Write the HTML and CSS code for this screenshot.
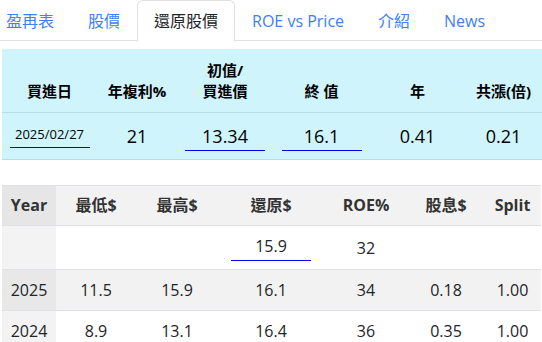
FILE: index.html
```html
<!DOCTYPE html>
<html lang="zh-Hant">
<head>
    <meta charset="UTF-8">
    <meta name="viewport" content="width=device-width, initial-scale=1.0">
    <title>還原股價</title>
    <link rel="stylesheet" href="styles.css">
</head>
<body>

<ul class="nav-tabs">
    <li><a class="tab">盈再表</a></li>
    <li><a class="tab">股價</a></li>
    <li><a class="tab active">還原股價</a></li>
    <li><a class="tab">ROE vs Price</a></li>
    <li><a class="tab">介紹</a></li>
    <li><a class="tab">News</a></li>
</ul>

<div class="content">
    <table class="calc">
        <colgroup>
            <col style="width:95px"><col style="width:80px"><col style="width:96px">
            <col style="width:97px"><col style="width:95px"><col style="width:77px">
        </colgroup>
        <thead>
            <tr>
                <th>買進日</th>
                <th>年複利%</th>
                <th>初值/<br>買進價</th>
                <th>終 值</th>
                <th>年</th>
                <th>共漲(倍)</th>
            </tr>
        </thead>
        <tbody>
            <tr>
                <td><input class="line-input date" value="2025/02/27"></td>
                <td>21</td>
                <td><input class="line-input" value="13.34"></td>
                <td><input class="line-input" value="16.1"></td>
                <td>0.41</td>
                <td>0.21</td>
            </tr>
        </tbody>
    </table>

    <table class="history">
        <colgroup>
            <col style="width:54px"><col style="width:80px"><col style="width:82px">
            <col style="width:106px"><col style="width:84px"><col style="width:76px">
            <col style="width:57px">
        </colgroup>
        <thead>
            <tr>
                <th class="year">Year</th>
                <th>最低$</th>
                <th>最高$</th>
                <th>還原$</th>
                <th>ROE%</th>
                <th>股息$</th>
                <th>Split</th>
            </tr>
        </thead>
        <tbody>
            <tr class="edit-row">
                <th class="year"></th>
                <td></td>
                <td></td>
                <td><input class="line-input small" value="15.9"></td>
                <td>32</td>
                <td></td>
                <td></td>
            </tr>
            <tr class="striped">
                <th class="year">2025</th>
                <td>11.5</td>
                <td>15.9</td>
                <td>16.1</td>
                <td>34</td>
                <td>0.18</td>
                <td>1.00</td>
            </tr>
            <tr>
                <th class="year">2024</th>
                <td>8.9</td>
                <td>13.1</td>
                <td>16.4</td>
                <td>36</td>
                <td>0.35</td>
                <td>1.00</td>
            </tr>
        </tbody>
    </table>
</div>

</body>
</html>
```

FILE: styles.css
```css
body {
    margin: 0;
    font-family: "Open Sans", "Noto Sans CJK TC", sans-serif;
    color: #212529;
    overflow: hidden;
}

.nav-tabs {
    display: flex;
    list-style: none;
    margin: 0 0 0 -11px;
    padding: 0;
    border-bottom: 1px solid #dee2e6;
    height: 40px;
}

.tab {
    display: block;
    padding: 8px 16px;
    height: 24px;
    line-height: 24px;
    font-size: 16px;
    color: #3d7ff5;
    border: 1px solid transparent;
    border-radius: 6px 6px 0 0;
}

.tab.active {
    color: #212529;
    background: #fff;
    border-color: #dee2e6 #dee2e6 #fff;
}

.content {
    padding: 8px 0 0 2px;
}

table {
    border-collapse: collapse;
    table-layout: fixed;
    text-align: center;
}

.calc {
    width: 540px;
    background: #cff4fc;
}

.calc th {
    height: 43px;
    padding: 10px 4px 10px;
    vertical-align: bottom;
    font-size: 15px;
    line-height: 21px;
    font-weight: bold;
    color: #000;
    border-bottom: 1px solid #badce3;
}

.calc td {
    height: 29px;
    padding: 8px 4px;
    font-size: 18px;
    color: #000;
    border-bottom: 1px solid #badce3;
}

.line-input {
    width: 80px;
    box-sizing: border-box;
    border: 0;
    border-bottom: 1px solid #0000ff;
    background: transparent;
    font-family: inherit;
    font-size: 18px;
    color: #000;
    text-align: center;
    padding: 3px 0 2px;
    outline: none;
}

.line-input.date {
    font-size: 13px;
    padding: 2px 0 4px;
    position: relative;
    top: -2px;
}

.line-input.small {
    font-size: 16px;
    color: #212529;
    padding: 1px 0 3px;
}

.history {
    width: 539px;
    margin-top: 25px;
    font-size: 16px;
}

.history th,
.history td {
    padding: 8px 4px;
    line-height: 24px;
    border-top: 1px solid #dee2e6;
    border-bottom: 1px solid #dee2e6;
}

.history thead th {
    height: 23px;
    line-height: 23px;
    background: #f2f2f2;
    font-weight: bold;
    color: #333;
}

.history thead th.year {
    background: #e6e6e6;
}

.history tbody th.year {
    font-weight: normal;
    background: #f3f3f3;
}

.history tbody tr.striped td {
    background: #f2f2f2;
}

.history tbody tr.striped th.year {
    background: #e8e8e8;
}

.edit-row td {
    height: 25px;
}
```
